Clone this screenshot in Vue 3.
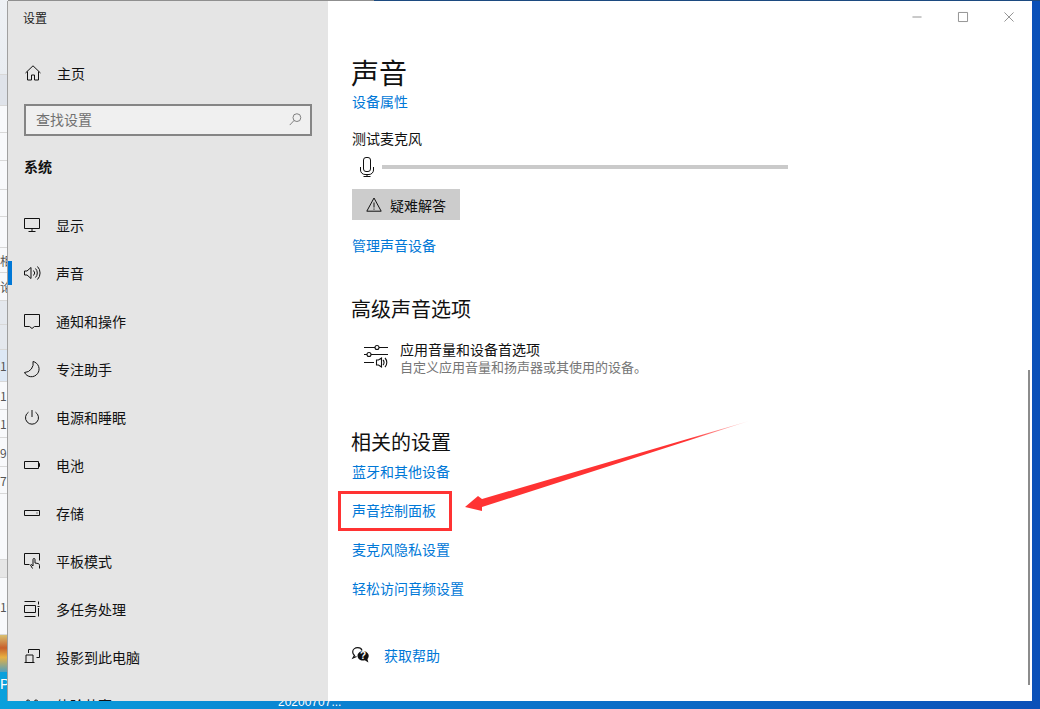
<script setup>
const strip = [
  { h: 75, c: 'a' }, { h: 31, c: 'b' }, { h: 27, c: 'w' }, { h: 28, c: 'w' }, { h: 29, c: 'w' }, { h: 27, c: 'w' },
  { h: 31, c: 'w' }, { h: 25, c: 'w', t: '相' }, { h: 28, c: 'w', t: '论' }, { h: 24, c: 'g' }, { h: 25, c: 'g' },
  { h: 32, c: 'h', t: '1' }, { h: 28, c: 'w', t: '1' }, { h: 28, c: 'w', t: '1' }, { h: 29, c: 'w', t: '9' }, { h: 27, c: 'w', t: '7' },
  { h: 66, c: 'w' }, { h: 18, c: 'g2' }, { h: 57, c: 'w', t: '19' }
]

const nav = [
  { label: '显示', icon: 'display' },
  { label: '声音', icon: 'sound', active: true },
  { label: '通知和操作', icon: 'notify' },
  { label: '专注助手', icon: 'moon' },
  { label: '电源和睡眠', icon: 'power' },
  { label: '电池', icon: 'battery' },
  { label: '存储', icon: 'storage' },
  { label: '平板模式', icon: 'tablet' },
  { label: '多任务处理', icon: 'multi' },
  { label: '投影到此电脑', icon: 'project' },
  { label: '体验共享', icon: 'share' }
]

const icons = {
  display: 'M.5 1.5h15v10H.5zM8 11.5v3M4.5 14.5h7',
  sound: 'M.5 6v4h2.5l4 3.5v-11L3 6zM9.5 5.5a3.5 3.5 0 0 1 0 5M11.5 3.5a6.5 6.5 0 0 1 0 9M13.5 1.5a9.5 9.5 0 0 1 0 13',
  notify: 'M.5 1.5h15v12h-5l-2.5 2-2.5-2h-5z',
  moon: 'M9 .5A7.700 7.700 0 1 1 .5 11.500 9 9 0 0 0 9 .5z',
  power: 'M8 1v7M4.500 3.200a6.500 6.500 0 1 0 7 0',
  battery: 'M.5 4.500h14v7H.5zM14.500 6.500h1v3h-1',
  storage: 'M.5 5.500h15v5H.5zM12.500 8h1',
  tablet: 'M5.500 11.500h-5v-11h15v7M8.500 15.500l-2-3.500 1-.5 1.500 1.500V6.500a1 1 0 0 1 2 0v3.500l3 .5c1 .2 1.500 1 1.500 2v3',
  multi: 'M.5 .5h11M.5 15.500h11M.5 4.500h11v7H.5zM14.500 .5v3M14.500 7v8.500M13.500 5.500h2',
  project: 'M4.500 4V.5h11v8h-3M.5 13.500h10M2 13.500V6h7v7.500',
  share: 'M4 3a2 2 0 1 0 .1 0M12 3a2 2 0 1 0 .1 0'
}
</script>

<template>
  <div class="desktop">
    <div class="back-strip">
      <div v-for="(r, i) in strip" :key="i" class="strip-row" :class="r.c" :style="{ height: r.h + 'px' }">{{ r.t }}</div>
      <div class="strip-img"></div>
      <div class="strip-p">P</div>
    </div>
    <div class="file-name">20200707...</div>

    <div class="window">
      <aside class="sidebar">
        <div class="app-title">设置</div>
        <div class="home">
          <svg class="ico" viewBox="0 0 16 16"><path d="M.5 8 8 .8 15.500 8M2.500 6.500v8.500h4v-5h3v5h4V6.500" /></svg>
          <span>主页</span>
        </div>
        <div class="search">
          <span>查找设置</span>
          <svg class="search-ico" viewBox="0 0 14 14"><circle cx="8.500" cy="5" r="4.200" /><path d="M5.500 8 .8 13" /></svg>
        </div>
        <div class="group">系统</div>
        <nav>
          <div v-for="item in nav" :key="item.label" class="nav-item" :class="{ active: item.active }">
            <svg class="ico" viewBox="0 0 16 16"><path :d="icons[item.icon]" /></svg>
            <span>{{ item.label }}</span>
          </div>
        </nav>
      </aside>

      <main class="content">
        <div class="win-controls">
          <svg viewBox="0 0 11 11"><path d="M.5 5.500h10" /></svg>
          <svg viewBox="0 0 11 11"><path d="M.5 .5h10v10H.5z" /></svg>
          <svg viewBox="0 0 11 11"><path d="M.5 .5l10 10M10.500 .5l-10 10" /></svg>
        </div>
        <h1>声音</h1>
        <a class="link first">设备属性</a>
        <div class="label">测试麦克风</div>
        <div class="mic-row">
          <svg class="mic" viewBox="0 0 14 20"><path d="M3.500 3a2.500 2.500 0 0 1 2.500-2.500h2A2.500 2.500 0 0 1 10.500 3v9A2.500 2.500 0 0 1 8 14.500H6A2.500 2.500 0 0 1 3.500 12zM.5 10v3A4.500 4.500 0 0 0 5 17.500h4a4.500 4.500 0 0 0 4.500-4.500v-3M7 17.500v2M3.500 19.500h7" /></svg>
          <div class="meter"></div>
        </div>
        <button class="trouble">
          <svg viewBox="0 0 16 15"><path d="M8 1 .8 14.200h14.400zM8 5.500v5M8 11.500v1.200" /></svg>
          <span>疑难解答</span>
        </button>
        <a class="link manage">管理声音设备</a>

        <h2 class="adv">高级声音选项</h2>
        <div class="app-row">
          <svg class="mixer" viewBox="0 0 24 25">
            <path d="M0 5.500h11M15 5.500h9M0 12.500h3M7 12.500h17M0 20.500h10" />
            <circle cx="13" cy="5.500" r="2" /><circle cx="5" cy="12.500" r="2" />
            <path d="M12.500 18v5h2l3 2v-9l-3 2zM19 18a3.500 3.500 0 0 1 0 5M21 16a6.500 6.500 0 0 1 0 9" />
          </svg>
          <div>
            <div class="app-name">应用音量和设备首选项</div>
            <div class="app-desc">自定义应用音量和扬声器或其使用的设备。</div>
          </div>
        </div>

        <h2 class="rel">相关的设置</h2>
        <a class="link rel-first">蓝牙和其他设备</a>
        <a class="link rel-next">声音控制面板</a>
        <a class="link rel-next">麦克风隐私设置</a>
        <a class="link rel-next">轻松访问音频设置</a>

        <div class="help">
          <svg viewBox="0 0 17 16">
            <path class="bubble" d="M10 3.500C9.500 1.800 7.800.7 5.800.7 3 .7.7 2.500.7 5c0 1.400.7 2.600 1.800 3.400L1 11l3.500-1.500" />
            <path class="solid" d="M11 4c-3 0-5.500 2.200-5.500 4.800s2.500 4.800 5.500 4.800c.7 0 1.300-.1 1.800-.3l3.600 2.200-1-3.400c.8-.8 1.300-2 1.300-3.300C16.700 6.200 14 4 11 4z" />
            <text x="11" y="12" class="q">?</text>
          </svg>
          <a class="link">获取帮助</a>
        </div>

        <div class="scrollbar"></div>
      </main>
    </div>

    <div class="red-box"></div>
    <svg class="arrow" viewBox="0 0 300 100">
      <defs>
        <linearGradient id="fade" gradientUnits="userSpaceOnUse" x1="285" y1="1" x2="225" y2="19">
          <stop offset="0" stop-color="#f33" stop-opacity=".15" />
          <stop offset="1" stop-color="#f33" />
        </linearGradient>
      </defs>
      <path d="M285 1 18 79 14 76 1 87 18 91 18 87 Z" fill="url(#fade)" />
    </svg>
  </div>
</template>

<style>
html, body { margin: 0; padding: 0; overflow: hidden; }
</style>

<style scoped>
.desktop {
  position: relative;
  width: 1040px;
  height: 709px;
  overflow: hidden;
  background:
    linear-gradient(90deg, #8f8f8f 0 36%, #1c4a80 36%) top / 100% 1px no-repeat,
    linear-gradient(90deg, #0aa0dc 0, #0a7fd0 35%, #0a50b8 100%);
  font-family: "Noto Sans CJK SC", "Liberation Sans", sans-serif;
  color: #111;
  font-size: 14px;
}
.back-strip {
  position: absolute;
  left: 0;
  top: 0;
  width: 8px;
  height: 709px;
  overflow: hidden;
  display: flex;
  flex-direction: column;
  font-size: 12px;
  color: #555;
}
.strip-row {
  box-sizing: border-box;
  flex: none;
  display: flex;
  align-items: center;
  white-space: nowrap;
  border-bottom: 1px solid #d8d8d8;
}
.a { background: linear-gradient(180deg, #eef1f5, #e9edf2); }
.b { background: #dfe3ea; }
.w { background: #f8f9fb; }
.g { background: #e4e8ee; }
.h { background: #dde8f5; }
.g2 { background: #e6e6e6; }
.strip-img {
  height: 37px;
  flex: none;
  background: linear-gradient(180deg, #d8c070 0, #c8602c 35%, #e8b040 60%, #50a0c0 100%);
}
.strip-p { color: #fff; font-family: "Liberation Sans", sans-serif; font-size: 14px; line-height: 20px; margin-top: 2px; }
.file-name {
  position: absolute;
  left: 278px;
  top: 695px;
  color: #fff;
  font-family: "Liberation Sans", sans-serif;
  font-size: 12px;
  line-height: 14px;
}
.window {
  position: absolute;
  left: 8px;
  top: 1px;
  width: 1024px;
  height: 700px;
  display: flex;
  background: #fff;
  box-shadow: -1px 0 0 #a0a0a0;
  overflow: hidden;
}
.sidebar {
  width: 320px;
  flex: none;
  background: #e5e5e5;
  overflow: hidden;
}
.app-title { font-size: 12px; line-height: 16px; padding: 9px 0 0 15px; color: #222; }
.ico {
  width: 16px;
  height: 16px;
  flex: none;
  fill: none;
  stroke: #111;
  stroke-width: 1;
  overflow: visible;
}
.home {
  display: flex;
  align-items: center;
  gap: 16px;
  height: 48px;
  margin-top: 23px;
  padding-left: 17px;
}
.search {
  box-sizing: border-box;
  height: 32px;
  width: 288px;
  margin: 7px 0 0 16px;
  border: 2px solid #858585;
  background: #f0f0f0;
  color: #707070;
  display: flex;
  align-items: center;
  justify-content: space-between;
  padding: 0 8px 2px 10px;
}
.search-ico { width: 13px; height: 13px; fill: none; stroke: #777; stroke-width: 1; }
.group { font-weight: 700; line-height: 20px; margin: 20px 0 0 16px; }
nav { margin-top: 25px; }
.nav-item {
  position: relative;
  display: flex;
  align-items: center;
  gap: 16px;
  height: 48px;
  padding-left: 16px;
}
.nav-item.active::before {
  content: "";
  position: absolute;
  left: 0;
  top: 12px;
  width: 4px;
  height: 24px;
  background: #0078d7;
}
.content {
  position: relative;
  flex: 1;
  padding-left: 24px;
  overflow: hidden;
}
.win-controls {
  position: absolute;
  top: 11px;
  right: 18px;
  display: flex;
  gap: 36px;
}
.win-controls svg {
  width: 10px;
  height: 10px;
  fill: none;
  stroke: #8a8a8a;
  stroke-width: 1;
  overflow: visible;
}
h1 { font-size: 28px; font-weight: 400; line-height: 40px; margin: 51px 0 0 -1px; color: #111; }
h2 { font-size: 20px; font-weight: 400; line-height: 28px; margin: 0 0 0 -1px; color: #111; }
.link { display: block; color: #0078d7; line-height: 20px; width: fit-content; }
.first { margin-top: -1px; }
.label { line-height: 20px; margin-top: 17px; }
.mic-row { display: flex; align-items: center; height: 24px; margin-top: 7px; padding-left: 8px; }
.mic { width: 14px; height: 20px; fill: none; stroke: #111; stroke-width: 1; flex: none; }
.meter { width: 406px; height: 4px; background: #cacaca; margin-left: 8px; }
.trouble {
  display: flex;
  align-items: center;
  gap: 8px;
  width: 108px;
  height: 31px;
  margin-top: 10px;
  padding: 0 0 0 14px;
  border: 0;
  background: #cccccc;
  font: inherit;
  color: #111;
}
.trouble svg { width: 16px; height: 15px; fill: none; stroke: #111; stroke-width: 1; }
.manage { margin-top: 15px; }
.adv { margin-top: 40px; }
.app-row { display: flex; align-items: flex-start; gap: 12px; margin-top: 17px; padding-left: 12px; }
.mixer { width: 24px; height: 25px; margin-top: 2px; margin-bottom: -3px; fill: none; stroke: #111; stroke-width: 1.100; flex: none; overflow: visible; }
.app-name { line-height: 18px; }
.app-desc { line-height: 18px; color: #767676; font-size: 13px; }
.rel { margin-top: 52px; }
.rel-first { margin-top: 5px; }
.rel-next { margin-top: 19px; }
.help { display: flex; align-items: center; gap: 15px; margin-top: 47px; }
.help svg { width: 17px; height: 16px; flex: none; overflow: visible; }
.bubble { fill: none; stroke: #111; stroke-width: 1.200; }
.solid { fill: #111; }
.q { fill: #fff; font-size: 10px; font-weight: 700; text-anchor: middle; font-family: "Liberation Sans", sans-serif; }
.scrollbar { position: absolute; right: 2px; top: 369px; width: 2px; height: 315px; background: #8c8c8c; }
.red-box {
  position: absolute;
  left: 338px;
  top: 491px;
  width: 114px;
  height: 40px;
  box-sizing: border-box;
  border: 3px solid #f33;
}
.arrow { position: absolute; left: 464px; top: 420px; width: 300px; height: 100px; }
</style>
